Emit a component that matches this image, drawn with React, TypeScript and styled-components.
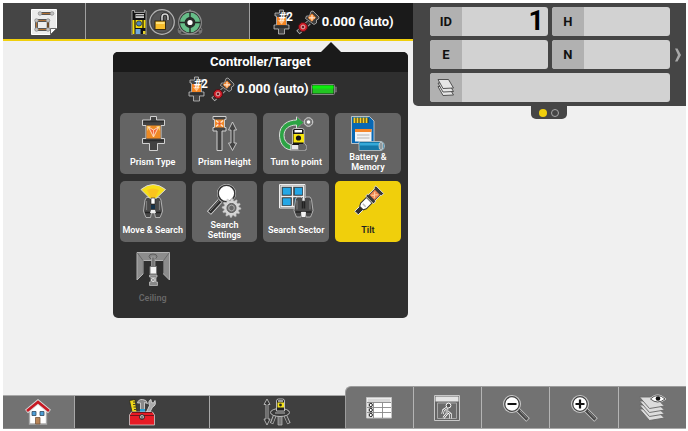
import React from "react";
import styled, { createGlobalStyle, css } from "styled-components";

const GlobalStyle = createGlobalStyle`
  * { box-sizing: border-box; }
  body { margin: 0; background: #fff; }
  button, input { font: inherit; color: inherit; border: 0; margin: 0; padding: 0; background: none; }
  button { cursor: pointer; }
  svg { display: block; flex: none; }
`;

/* ---------- layout parts ---------- */

const Screen = styled.div`
  min-height: 100vh;
  padding: 3px 2px 2px 3px;
  display: flex;
  flex-direction: column;
  font-family: Roboto, "Liberation Sans", sans-serif;
`;

const Header = styled.header`
  display: grid;
  grid-template-columns: 3fr 2fr;
  align-items: start;
  background: #f0f0f0;
`;

const TabArea = styled.div`
  position: relative;
`;

const Tabs = styled.nav`
  display: grid;
  grid-template-columns: minmax(0, 1fr) minmax(0, 2fr) minmax(0, 2fr);
  gap: 1px;
  height: 38px;
  border-bottom: 2px solid #f0cf0c;
  background: #a0a0a0;
`;

const Tab = styled.button<{ $active?: boolean }>`
  display: flex;
  align-items: center;
  justify-content: center;
  gap: 2px;
  padding: ${(p) => (p.$active ? "2px 0 0 4px" : "2px 0 0")};
  background: ${(p) => (p.$active ? "#1a1a1a" : "#454545")};
`;

const TargetValue = styled.span`
  color: #fff;
  font-size: 13px;
  line-height: 16px;
  font-weight: 700;
`;

const Popover = styled.section`
  position: absolute;
  z-index: 2;
  top: 49px;
  right: 5px;
  width: 295px;
  height: 266px;
  border-radius: 5px;
  background: #2f2f2f;
`;

const PopoverArrow = styled.span`
  position: absolute;
  top: -10px;
  right: 67px;
  border: solid transparent;
  border-width: 0 10px 10px;
  border-bottom-color: #1a1a1a;
`;

const PopoverTitle = styled.h1`
  margin: 0;
  border-radius: 5px 5px 0 0;
  background: #1a1a1a;
  color: #fff;
  font-size: 13px;
  line-height: 20px;
  font-weight: 700;
  text-align: center;
`;

const Status = styled.div`
  display: flex;
  align-items: center;
  justify-content: center;
  gap: 2px;
  height: 34px;
  padding-left: 4px;
`;

const TileGrid = styled.div`
  display: grid;
  grid-template-columns: repeat(4, minmax(0, 1fr));
  grid-auto-rows: 61px;
  gap: 7px 6px;
  padding: 7px;
`;

const tileTone = {
  normal: css`
    background: #646464;
    color: #fff;
  `,
  selected: css`
    background: #f0cf0c;
    color: #222;
  `,
  disabled: css`
    background: transparent;
    color: #686868;
  `,
};

const Tile = styled.button<{ $tone: keyof typeof tileTone }>`
  display: flex;
  flex-direction: column;
  align-items: center;
  justify-content: center;
  border-radius: 5px;
  ${(p) => tileTone[p.$tone]}
`;

const TileLabel = styled.span`
  display: flex;
  align-items: center;
  justify-content: center;
  height: 22px;
  padding: 0 6px;
  font-size: 9px;
  line-height: 10px;
  font-weight: 600;
  text-align: center;
`;

const TileText = styled.span<{ $wrap?: boolean }>`
  white-space: ${(p) => (p.$wrap ? "normal" : "nowrap")};
`;

const DataPanel = styled.section`
  display: flex;
  flex-direction: column;
  align-items: center;
`;

const PanelBody = styled.div`
  width: 100%;
  display: grid;
  grid-template-columns: 1fr 16px;
  padding: 4px 0 4px 17px;
  background: #454545;
  border-bottom-left-radius: 5px;
`;

const Fields = styled.form`
  display: grid;
  grid-template-columns: 1fr 1fr;
  gap: 4px;
`;

const Field = styled.label<{ $wide?: boolean }>`
  display: flex;
  height: 29px;
  border-radius: 3px;
  overflow: hidden;
  background: #d2d2d2;
  grid-column: ${(p) => (p.$wide ? "1 / -1" : "auto")};
`;

const FieldName = styled.span`
  flex: none;
  width: 32px;
  display: flex;
  align-items: center;
  justify-content: center;
  background: #b1b1b1;
  color: #111;
  font-size: 13px;
  font-weight: 700;
`;

const FieldInput = styled.input`
  flex: 1;
  min-width: 0;
  padding: 0 4px;
  color: #000;
  font-size: 27px;
  line-height: 29px;
  font-weight: 700;
  text-align: right;
  outline: none;
`;

const NextButton = styled.button`
  display: flex;
  align-items: center;
  justify-content: center;
`;

const PageDots = styled.div`
  display: flex;
  align-items: center;
  justify-content: center;
  gap: 4px;
  width: 36px;
  height: 13px;
  border-radius: 0 0 5px 5px;
  background: #454545;
`;

const Dot = styled.button<{ $on?: boolean }>`
  width: 8px;
  height: 8px;
  border-radius: 50%;
  ${(p) =>
    p.$on
      ? css`
          background: #f0cf0c;
        `
      : css`
          border: 1px solid #a8a8a8;
        `}
`;

const Canvas = styled.main`
  flex: 1;
  background: #f0f0f0;
`;

const Footer = styled.footer`
  display: grid;
  grid-template-columns: 1fr 1fr;
  align-items: end;
  background: #f0f0f0;
`;

const MainBar = styled.nav`
  display: grid;
  grid-template-columns: 71fr 135fr 135fr;
  gap: 1px;
  height: 34px;
  border-top: 1px solid #a8a8a8;
  border-bottom: 1px solid #8a8a8a;
  background: #a8a8a8;
`;

const ToolBar = styled.nav`
  display: grid;
  grid-template-columns: repeat(5, minmax(0, 1fr));
  gap: 1px;
  height: 43px;
  border-top: 1px solid #9c9c9c;
  border-left: 1px solid #9c9c9c;
  border-bottom: 1px solid #a8a8a8;
  border-top-left-radius: 6px;
  background: #b4b4b4;
  overflow: hidden;
`;

const BarButton = styled.button<{ $light?: boolean }>`
  display: flex;
  align-items: center;
  justify-content: center;
  background: ${(p) => (p.$light ? "#727272" : "#3f3f3f")};
`;

/* ---------- drawings ---------- */

type SvgProps = { w: number; h: number; children: React.ReactNode };
const Svg = ({ w, h, children }: SvgProps) => (
  <svg width={w} height={h} viewBox={`0 0 ${w} ${h}`} fill="none" aria-hidden="true">
    {children}
  </svg>
);

const SketchIcon = () => (
  <Svg w={26} h={26}>
    <path d="M.5.5h25v19l-6 6H.5z" fill="#ececec" stroke="#fff" />
    <path d="M25.5 19.5l-6 6v-6z" fill="#fff" stroke="#444" strokeWidth=".8" />
    <path d="M10 4.500h11M5.500 11.500h11.500v9H5.500z" stroke="#222" strokeWidth="2.400" />
    <path d="M10 4.500h11M5.500 11.500h11.500v9H5.500z" stroke="#c47a34" strokeWidth=".9" />
    {[[9, 4.5], [21, 4.5], [5.5, 11.5], [17, 11.5], [5.5, 20.5], [17, 20.5]].map(([x, y]) => (
      <circle key={`${x}-${y}`} cx={x} cy={y} r="1.800" fill="#c4c4c4" stroke="#888" strokeWidth=".7" />
    ))}
  </Svg>
);

const StationIcon = () => (
  <Svg w={16} h={26}>
    <path d="M1 1.500h2.500v2h10V1l1.500 1v24H1z" fill="#111" stroke="#c8c8c8" strokeWidth=".7" />
    <path d="M4.500 5h8.500v4H4.500z" fill="#c9c9c9" />
    <path d="M4.500 6h8.500v1.200H4.500z" fill="#555" />
    <path d="M1.500 11h13v8h-13z" fill="#f4dc0c" />
    <path d="M4 10v10M12 10v10" stroke="#111" strokeWidth="1.200" />
    <circle cx="8" cy="14.500" r="2.600" fill="#4f86b8" stroke="#26343d" strokeWidth=".8" />
    <path d="M1.500 19h2v6h-2z" fill="#f4dc0c" />
    <path d="M4.500 20h5v5h-5z" fill="#72a8dc" />
    <path d="M12 22h2.500v3H12z" fill="#e3cf2d" />
  </Svg>
);

const UnlockIcon = () => (
  <Svg w={26} h={26}>
    <circle cx="13" cy="13" r="12.300" fill="#555" stroke="#b5b5b5" strokeWidth="1.200" />
    <circle cx="13" cy="13" r="10.800" stroke="#3b3b3b" strokeWidth=".6" />
    <path d="M13 13V8a3 3 0 0 1 6 0v3" stroke="#1d1d1d" strokeWidth="3.200" />
    <path d="M13 13V8a3 3 0 0 1 6 0v3" stroke="#d5d5d5" strokeWidth="1.600" />
    <rect x="6" y="12" width="10.500" height="8.500" fill="#f6bd2b" stroke="#2a220c" strokeWidth=".9" />
    <path d="M7 13h8.500v2H7z" fill="#ffe27c" />
  </Svg>
);

const LevelIcon = () => (
  <Svg w={26} h={26}>
    <path d="M13 .6 24.800 20.500Q25 25.300 20 25.300H6Q1 25.300 1.200 20.500z" fill="#3c3c3c" stroke="#858585" />
    <circle cx="13" cy="13.500" r="11.300" fill="#2c2f2d" stroke="#8f8f8f" strokeWidth="1.200" />
    <circle cx="13" cy="13.500" r="7.500" stroke="#66bd88" strokeWidth="5" />
    <path d="M13 3v21M2.500 13.500h21" stroke="#252b28" strokeWidth="1.400" />
    <circle cx="13" cy="13.500" r="4.800" stroke="#252b28" strokeWidth="1.200" />
    <circle cx="13" cy="13.500" r="2.600" fill="#fff" />
    <circle cx="3" cy="22.500" r="1.500" fill="#777" />
    <circle cx="23" cy="22.500" r="1.500" fill="#777" />
  </Svg>
);

const PrismNumber = styled.text`
  font-family: Roboto, sans-serif;
  font-size: 12px;
  font-weight: 700;
  fill: #fff;
`;

const PrismTwoIcon = () => (
  <Svg w={21} h={26}>
    <path
      d="M6.500 1h4v3H15v3h-1.500v9H16v4h-4.500v5H5.500v-5H1v-4h2.500V7H2V4h4.500z"
      fill="#444"
      stroke="#c2c2c2"
      strokeWidth=".8"
    />
    <path d="M4 8h9v8H4z" fill="#f48522" />
    <path d="M5 11l3.500 4.500L12 11z" fill="#ffc48c" />
    <path d="M2 16.500h13v2.500H2z" fill="#303030" />
    <PrismNumber x="6" y="12">#2</PrismNumber>
  </Svg>
);

const PointerIcon = () => (
  <Svg w={24} h={25}>
    <path d="M2 22.500 13 12.500" stroke="#bdbdbd" strokeWidth="5" />
    <path d="M2.500 22 13 12.500" stroke="#333" strokeWidth="3.400" />
    <path d="M15 1.500 17 1l6 6-.5 2-2 1v3l-2.500 1.500L9.500 8.500 10.500 6h3z" fill="#3a3a3a" stroke="#b5b5b5" strokeWidth=".8" />
    <path d="M16 3.500 20 7.500 15.800 11.800 11.800 7.800z" fill="#f4852c" />
    <path d="M16 5v5.500M13 7.800h6" stroke="#ffe6cf" strokeWidth="1.200" />
    <circle cx="7" cy="17" r="4.500" fill="#d01c27" stroke="#501015" />
    <circle cx="7" cy="17" r="1.900" fill="#6b2025" stroke="#f2c0c0" strokeWidth=".9" />
  </Svg>
);

const BatteryIcon = () => (
  <Svg w={26} h={11}>
    <rect x=".5" y=".5" width="23" height="10" rx="1" fill="#222" stroke="#858585" />
    <path d="M1.500 1.500h21v8h-21z" fill="#22c522" />
    <path d="M1.500 1.500h21v3h-21z" fill="#0bef0b" />
    <path d="M24 3h1.500v5H24z" fill="#555" stroke="#858585" strokeWidth=".5" />
  </Svg>
);

const PrismTypeIcon = () => (
  <Svg w={36} h={36}>
    <path
      d="M15.500 1.500h6V5h8v5.500H26v13h3.500v5H22.500v7h-8v-7H7.500v-5H11v-13H7.500V5h8z"
      fill="#424242"
      stroke="#d0d0d0"
    />
    <path d="M8.500 6.500h20.500M8.500 25.500h20.500" stroke="#2c2c2c" strokeWidth="1.500" />
    <path d="M11.500 10.500h14v13h-14z" fill="#ee8a24" />
    <path d="M12 11h4l-4 5zM25 11h-4l4 5z" fill="#fbc158" />
    <path d="M13.500 12 18.500 22 23.500 12 18.500 15z" fill="#f2673a" stroke="#ffe2c8" strokeWidth=".9" />
    <path d="M18.500 15v7" stroke="#ffd8b8" strokeWidth=".8" />
  </Svg>
);

const PrismHeightIcon = () => (
  <Svg w={36} h={36}>
    <path d="M7 1.500h13v3h-1.500v8H20v3.500h-4v19.500h-5V16H7v-3.500h1.500v-8H7z" fill="#424242" stroke="#d0d0d0" />
    <path d="M9 4.500h9v8H9z" fill="#f08a2c" />
    <path d="M10 5.500l7 6M17 5.500l-7 6" stroke="#ffe6d0" strokeWidth="1.300" />
    <circle cx="13.500" cy="8.500" r="1.500" fill="#ee5a2c" />
    <path d="m26.500 7 4 8H28v13h2.500l-4 7.500-4-7.500H25V15h-2.500z" fill="#444" stroke="#cfcfcf" strokeWidth=".9" />
  </Svg>
);

const TurnIcon = () => (
  <Svg w={36} h={36}>
    <path
      d="M18.500 1.500 26 7.500l-7.500 6V10C11 10 6 14 6 20.500q0 7 7 9.500v5C5 34 1.500 27 1.500 20 1.500 10 10 5 18.500 5z"
      fill="#2ca444"
      stroke="#dcdcdc"
    />
    <path d="M18.500 1.500 26 7.500l-7.500 6" stroke="#222" strokeWidth=".6" />
    <circle cx="30.500" cy="7" r="4.300" fill="#777" stroke="#d8d8d8" />
    <circle cx="30.500" cy="7" r="1.800" fill="#fff" />
    <path d="M14.500 29V15.500q0-2 2-2h7.500q2 0 2 2V29l2 1v5H13v-5z" fill="#151515" stroke="#d8d8d8" strokeWidth=".8" />
    <path d="M16.500 15h7.500v2.500h-7.500z" fill="#fff" />
    <path d="M15.500 19h10.500v8.500H15.500z" fill="#f8e610" />
    <circle cx="20.500" cy="23" r="2.600" fill="#151515" />
    <path d="M13.500 30h7v4.500h-7z" fill="#e8e8e8" />
    <path d="M21 29h6v5.500h-6z" fill="#626262" />
  </Svg>
);

const MemoryIcon = () => (
  <Svg w={36} h={36}>
    <path d="M1.500 1.500h18l4.500 4.500v22.500h-22.500z" fill="#0868b4" stroke="#d8d8d8" strokeWidth=".8" />
    <path d="M3.500 3h15v5h-15z" fill="#333019" />
    <path d="M4.500 2.500v5.500M7.500 2.500v5.500M10.500 2.500v5.500M13.500 2.500v5.500M16.500 2.500v5.500" stroke="#f4cf2c" strokeWidth="1.900" />
    <path d="M5 14h16.500v12.500H5z" fill="#f4f4f4" />
    <path d="M5 14h16.500v3H5z" fill="#f4872c" />
    <path d="M7 20h12.500M7 23h12.500" stroke="#b4b4b4" />
    <path d="M9 26.500h22.500q3 1 3 4.500t-3 4.500H9z" fill="#1478a8" stroke="#c8c8c8" strokeWidth=".8" />
    <path d="M9.500 28h20v2.500h-20z" fill="#35a9d8" />
    <ellipse cx="31" cy="31" rx="2" ry="4" fill="#8f989c" stroke="#ddd" strokeWidth=".7" />
  </Svg>
);

const Binoculars = () => (
  <>
    <path
      d="M2.500.5h4l1.500 1.500v2h2V2l1.500-1.500h4L17 3l1.500 11-1 3-1.500 3.500h-4.500L10.500 16h-3L6.500 20.500H2L.5 17-.5 14 1 3z"
      fill="#494949"
      stroke="#c8c8c8"
      strokeWidth=".8"
    />
    <path d="M2.500 4v9M15.500 4v9" stroke="#7b7b7b" strokeWidth="1.200" />
    <path d="M1 15.500h6M11 15.500h6M8 5v7M10 5v7" stroke="#222" strokeWidth="1.500" />
  </>
);

const MoveSearchIcon = () => (
  <Svg w={36} h={36}>
    <g transform="translate(9 14)">
      <Binoculars />
    </g>
    <path d="M6 6.500Q18 -3.500 30.500 6.500L21 15.500h-6z" fill="#f6df18" stroke="#d8d8d8" />
    <path d="M12 7q6-3 12 0l-4 8h-4z" fill="#fbc41e" />
    <path d="M16 15h4v6h-4z" fill="#fff" stroke="#222" strokeWidth=".6" />
    <path d="M16 22h4v4h-4z" fill="#153249" />
    <path d="M16 27h4l1 3h-6z" fill="#eee" />
  </Svg>
);

const gearPoints = Array.from({ length: 48 }, (_, i) => {
  const a = (i / 48) * Math.PI * 2;
  const r = i % 4 < 2 ? 9.5 : 7.5;
  return `${(25.5 + Math.cos(a) * r).toFixed(1)},${(25 + Math.sin(a) * r).toFixed(1)}`;
}).join(" ");

const SearchSettingsIcon = () => (
  <Svg w={36} h={36}>
    <path d="M3 30 14 18" stroke="#e0e0e0" strokeWidth="5.500" />
    <path d="M3.500 29.500 14 18" stroke="#2b2b2b" strokeWidth="3.800" />
    <path d="M4 28 14 17" stroke="#777" />
    <circle cx="20.500" cy="10.500" r="9.500" fill="#ddd" />
    <circle cx="20.500" cy="10.500" r="8.300" fill="#fff" stroke="#353535" strokeWidth="1.500" />
    <polygon points={gearPoints} fill="#d4d4d4" stroke="#aaa" strokeWidth=".5" />
    <circle cx="25.500" cy="25" r="4.500" fill="#777" stroke="#555" />
    <circle cx="25.500" cy="25" r="2.800" fill="#686868" stroke="#aaa" />
  </Svg>
);

const SearchSectorIcon = () => (
  <Svg w={36} h={36}>
    <path d="M1.500 1.500H27V25H1.500z" fill="#4c4c4c" stroke="#eee" />
    <path d="M3 3h22.500v20.500H3zM14.500 3v21M3 13.500h23" stroke="#eee" strokeWidth="1.300" />
    <path d="M4.500 4.500H13V12H4.500zM16.500 4.500h8V12h-8zM4.500 15H13v7.500H4.500zM16.500 15h8v7.500h-8z" fill="#25a7e6" stroke="#333" strokeWidth=".5" />
    <g transform="translate(16.500 13.500)">
      <Binoculars />
    </g>
    <path d="M23 29h5l-1 5h-3z" fill="#f2f2f2" />
  </Svg>
);

const TiltIcon = () => (
  <Svg w={36} h={36}>
    <g transform="rotate(45 18.500 18)">
      <path d="M16 27h5v8h-5z" fill="#303030" stroke="#eee" strokeWidth=".9" />
      <path d="M14.500 17h8v8l-1.500 3h-5l-1.500-3z" fill="#fff" stroke="#333" />
      <path d="M13 2h11v3h-1v8.500h1v3H13v-3h1V5h-1z" fill="#393939" stroke="#efefef" strokeWidth=".8" />
      <path d="M15 5.500h7V13h-7z" fill="#ef8450" />
      <path d="M16.500 7l4 5M20.500 7l-4 5" stroke="#ffd2a8" />
      <path d="M16.500 24h4" stroke="#bbb" strokeWidth="1.500" />
    </g>
  </Svg>
);

const CeilingIcon = () => (
  <Svg w={36} h={36}>
    <path d="M2 1.500h32.500V29l-6-6V9.500H8V23l-6 6z" fill="#8c8c8c" stroke="#b2b2b2" />
    <path d="M2.500 2 8 9.500v13M34 2l-5.500 7.500v13" stroke="#666" strokeWidth=".9" />
    <ellipse cx="18" cy="5.500" rx="4" ry="2.500" fill="#858585" stroke="#555" strokeWidth=".8" />
    <path d="M16.500 6h3.500v10h-3.500z" fill="#777" stroke="#aaa" strokeWidth=".7" />
    <path d="M15 15.500h6.500V23H15z" fill="#f4f4f4" stroke="#777" />
    <path d="M14.500 24h7.500v2h-1v5h1.500v3.500h-8V31h1.500v-5h-1.500z" fill="#888" stroke="#bbb" strokeWidth=".8" />
    <path d="M16 26.500h4.500V31H16z" fill="#d8d8d8" />
    <path d="M16 27l4.500 4M20.500 27 16 31" stroke="#777" strokeWidth=".7" />
  </Svg>
);

const LayersIcon = () => (
  <Svg w={18} h={18}>
    {[7.5, 4, 0.5].map((y) => (
      <path
        key={y}
        d={`M1 ${y}h10.500l5 8.500-10.500 .5z`}
        fill="#e6e6e6"
        stroke="#444"
        strokeWidth=".9"
      />
    ))}
  </Svg>
);

const ChevronIcon = () => (
  <Svg w={8} h={14}>
    <path d="M1 .5h2.500l3.500 6.500-3.500 6.500H1L4 7z" fill="#a8a8a8" />
  </Svg>
);

const HomeIcon = () => (
  <Svg w={26} h={26}>
    <path d="M4.500 11 13 3.500l8.500 7.500v14h-17z" fill="#fff" stroke="#aaa" strokeWidth="1.300" />
    <path d="M1.500 12.500 13 3l11.500 9.500" stroke="#ddd" strokeWidth="4.500" />
    <path d="M2 12 13 3l11 9" stroke="#c71822" strokeWidth="2.800" />
    <path d="M7 12.500h4v4H7zM15 12.500h4v4h-4z" fill="#4d9ed7" stroke="#33495c" strokeWidth=".8" />
    <path d="M10.500 18.500h4.500V25h-4.500z" fill="#b98557" stroke="#74563c" strokeWidth=".8" />
  </Svg>
);

const ToolboxIcon = () => (
  <Svg w={28} h={28}>
    <path d="M1.500 2.500 7 1.500l2 12.500H4z" fill="#efd719" stroke="#222" strokeWidth=".8" />
    <path d="M5 4h2M5 6.500h2.500M5.500 9H8M6 11.500h2" stroke="#222" strokeWidth=".8" />
    <path d="M9.500 5q1-4 5-3.500 4 0 5 4l-3-1v9h-4V5z" fill="#898989" stroke="#ddd" strokeWidth=".8" />
    <path d="M18.500 14 21.500 7.500q-2-4.500 1.500-6l.5 3 2 .5 1.500-2.500q1.500 5-2.500 6.500L22 14z" fill="#aaa" stroke="#e2e2e2" strokeWidth=".8" />
    <path d="M12 11h5v4h-5z" fill="#27a0d4" />
    <path d="M3.500 14h21l2 3v10h-25V17z" fill="#e71b25" stroke="#ccc" strokeWidth=".8" />
    <path d="M2 17.500h24M4 14.500h20" stroke="#70151b" strokeWidth="1.200" />
    <circle cx="14" cy="19" r="2.400" fill="#d8d8d8" stroke="#222" />
    <path d="M14 18v3" stroke="#222" />
  </Svg>
);

const SetupIcon = () => (
  <Svg w={28} h={28}>
    <path d="m4 1 3 5.500H5v14.500h2L4 27l-3-6h2V6.500H1z" fill="#333" stroke="#bbb" strokeWidth=".9" />
    <path d="M12 17 8.500 25.500M22 17l4 8.500" stroke="#bababa" strokeWidth="3.500" />
    <path d="M12 17 9 25M22 17l3.500 8" stroke="#444" strokeWidth="2" />
    <path d="M15 17h4v10h-4z" fill="#777" stroke="#bbb" strokeWidth=".7" />
    <ellipse cx="17" cy="14.500" rx="9.500" ry="4" fill="#393939" stroke="#bbb" />
    <path d="M12 15h10" stroke="#777" strokeWidth="2" />
    <path d="M13.500 13V3q0-2 2-2h4q2 0 2 2v10z" fill="#222" stroke="#ddd" strokeWidth=".8" />
    <path d="M15 2h5v2h-5z" fill="#999" />
    <path d="M14.500 4.500h6.500v5h-6.500z" fill="#f4e21e" />
    <circle cx="17.500" cy="7" r="1.400" fill="#222" />
  </Svg>
);

const TableIcon = () => (
  <Svg w={26} h={22}>
    <path d="M.5.5h25v20.500H.5z" fill="#fff" stroke="#c2c2c2" />
    <path d="M1.500 1.500h23v4h-23z" fill="#d8d8d8" />
    <path d="M1.500 5.500h5v15h-5z" fill="#d4d4d4" />
    <path d="M1 5.500h24M1 10.500h24M1 15.500h24M7.500 5.500V21M16.500 5.500V21" stroke="#888" strokeWidth=".9" />
    {[8, 13, 18].map((y) => (
      <circle key={y} cx="4.800" cy={y} r="1.600" fill="#fff" stroke="#222" strokeWidth="1" />
    ))}
  </Svg>
);

const ViewIcon = () => (
  <Svg w={26} h={26}>
    <path d="M.5.5h25v25H.5z" fill="#646464" stroke="#c8c8c8" />
    <path d="M1.500 1.500h23v5h-23z" fill="#e4e4e4" />
    <path d="M3.500 8h19v15.500h-19z" stroke="#a8a8a8" fill="#6b6b6b" />
    <circle cx="14.500" cy="10.500" r="2.400" fill="#555" stroke="#fff" />
    <path d="M13.500 12.500 9.500 15l-1 4M13 13.500v5l-3.500 4.500M14 17l2.500 2v4.500" stroke="#fff" strokeWidth="2.400" />
    <path d="M13.500 12.500 9.500 15l-1 4M13 13.500v5l-3.500 4.500M14 17l2.500 2v4.500" stroke="#444" strokeWidth=".8" />
  </Svg>
);

const ZoomIcon = ({ plus }: { plus?: boolean }) => (
  <Svg w={28} h={28}>
    <path d="m15 15 11 11" stroke="#c8c8c8" strokeWidth="5" />
    <path d="m15 15 10.500 10.500" stroke="#444" strokeWidth="3.200" />
    <path d="m18 17 7 7.500" stroke="#8a8a8a" />
    <circle cx="10" cy="10" r="9" fill="#c8c8c8" />
    <circle cx="10" cy="10" r="7.300" fill="#fff" stroke="#444" strokeWidth="1.300" />
    <path d={plus ? "M5.500 10h9M10 5.500v9" : "M5.500 10h9"} stroke="#111" strokeWidth="2.200" />
  </Svg>
);

const VisibleLayersIcon = () => (
  <Svg w={28} h={28}>
    {[15, 11, 7, 3].map((y) => (
      <path
        key={y}
        d={`M1.500 ${y}h15.500l9.500 9-15 2.500z`}
        fill="#dcdcdc"
        stroke="#666"
        strokeWidth=".9"
      />
    ))}
    <path d="M12.500 5q7-7 14.500 0-7.500 6-14.500 0z" fill="#fff" stroke="#ddd" strokeWidth="1.800" />
    <path d="M12.500 5q7-7 14.500 0-7.500 6-14.500 0z" fill="#fff" stroke="#333" strokeWidth=".8" />
    <circle cx="20" cy="4.500" r="2.300" fill="#111" />
  </Svg>
);

/* ---------- content ---------- */

type TileItem = {
  label: string;
  icon: React.ReactNode;
  tone?: keyof typeof tileTone;
  wrap?: boolean;
};

const tiles: TileItem[] = [
  { label: "Prism Type", icon: <PrismTypeIcon /> },
  { label: "Prism Height", icon: <PrismHeightIcon /> },
  { label: "Turn to point", icon: <TurnIcon /> },
  { label: "Battery & Memory", icon: <MemoryIcon />, wrap: true },
  { label: "Move & Search", icon: <MoveSearchIcon /> },
  { label: "Search Settings", icon: <SearchSettingsIcon />, wrap: true },
  { label: "Search Sector", icon: <SearchSectorIcon /> },
  { label: "Tilt", icon: <TiltIcon />, tone: "selected" },
  { label: "Ceiling", icon: <CeilingIcon />, tone: "disabled" },
];

const TargetStatus = () => (
  <>
    <PrismTwoIcon />
    <PointerIcon />
    <TargetValue>0.000 (auto)</TargetValue>
  </>
);

export default function App() {
  return (
    <Screen>
      <GlobalStyle />
      <Header>
        <TabArea>
          <Tabs>
            <Tab aria-label="Sketch">
              <SketchIcon />
            </Tab>
            <Tab aria-label="Instrument">
              <StationIcon />
              <UnlockIcon />
              <LevelIcon />
            </Tab>
            <Tab $active>
              <TargetStatus />
            </Tab>
          </Tabs>
          <Popover>
            <PopoverArrow />
            <PopoverTitle>Controller/Target</PopoverTitle>
            <Status>
              <TargetStatus />
              <BatteryIcon />
            </Status>
            <TileGrid>
              {tiles.map(({ label, icon, tone = "normal", wrap }) => (
                <Tile key={label} $tone={tone} disabled={tone === "disabled"}>
                  {icon}
                  <TileLabel>
                    <TileText $wrap={wrap}>{label}</TileText>
                  </TileLabel>
                </Tile>
              ))}
            </TileGrid>
          </Popover>
        </TabArea>
        <DataPanel>
          <PanelBody>
            <Fields onSubmit={(e) => e.preventDefault()}>
              {[["ID", "1"], ["H", ""], ["E", ""], ["N", ""]].map(([name, value]) => (
                <Field key={name}>
                  <FieldName>{name}</FieldName>
                  <FieldInput defaultValue={value} />
                </Field>
              ))}
              <Field $wide>
                <FieldName>
                  <LayersIcon />
                </FieldName>
                <FieldInput aria-label="Layer" />
              </Field>
            </Fields>
            <NextButton type="button" aria-label="Next page">
              <ChevronIcon />
            </NextButton>
          </PanelBody>
          <PageDots>
            <Dot $on aria-label="Page 1" />
            <Dot aria-label="Page 2" />
          </PageDots>
        </DataPanel>
      </Header>
      <Canvas />
      <Footer>
        <MainBar>
          <BarButton $light aria-label="Home">
            <HomeIcon />
          </BarButton>
          <BarButton aria-label="Tools">
            <ToolboxIcon />
          </BarButton>
          <BarButton aria-label="Setup">
            <SetupIcon />
          </BarButton>
        </MainBar>
        <ToolBar>
          <BarButton $light aria-label="Table">
            <TableIcon />
          </BarButton>
          <BarButton $light aria-label="View">
            <ViewIcon />
          </BarButton>
          <BarButton $light aria-label="Zoom out">
            <ZoomIcon />
          </BarButton>
          <BarButton $light aria-label="Zoom in">
            <ZoomIcon plus />
          </BarButton>
          <BarButton $light aria-label="Layers">
            <VisibleLayersIcon />
          </BarButton>
        </ToolBar>
      </Footer>
    </Screen>
  );
}
